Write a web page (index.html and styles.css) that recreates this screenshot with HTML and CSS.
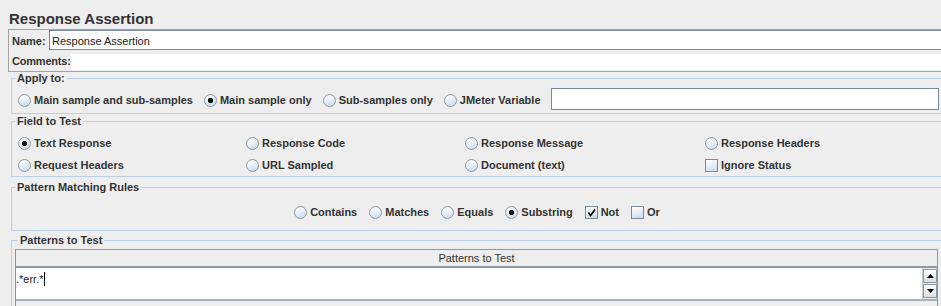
FILE: index.html
```html
<!DOCTYPE html>
<html lang="en">
<head>
<meta charset="utf-8">
<title>Response Assertion</title>
<link rel="stylesheet" href="styles.css">
</head>
<body>
<div class="page">
  <h1 class="title">Response Assertion</h1>

  <div class="namebox">
    <div class="nrow">
      <span class="lbl lbl-name">Name:</span>
      <div class="tf name-tf">Response Assertion</div>
    </div>
    <div class="crow">
      <span class="lbl lbl-comments">Comments:</span>
      <div class="ta"></div>
    </div>
  </div>

  <fieldset class="grp apply">
    <legend>Apply to:</legend>
    <div class="row">
      <label class="opt"><span class="radio"></span>Main sample and sub-samples</label>
      <label class="opt"><span class="radio on"></span>Main sample only</label>
      <label class="opt"><span class="radio"></span>Sub-samples only</label>
      <label class="opt"><span class="radio"></span>JMeter Variable</label>
      <div class="tf var-tf"></div>
    </div>
  </fieldset>

  <fieldset class="grp field">
    <legend>Field to Test</legend>
    <div class="fgrid">
      <label class="opt"><span class="radio on"></span>Text Response</label>
      <label class="opt"><span class="radio"></span>Response Code</label>
      <label class="opt"><span class="radio"></span>Response Message</label>
      <label class="opt"><span class="radio"></span>Response Headers</label>
      <label class="opt"><span class="radio"></span>Request Headers</label>
      <label class="opt"><span class="radio"></span>URL Sampled</label>
      <label class="opt"><span class="radio"></span>Document (text)</label>
      <label class="opt"><span class="check"></span>Ignore Status</label>
    </div>
  </fieldset>

  <fieldset class="grp rules">
    <legend>Pattern Matching Rules</legend>
    <div class="crow-rules">
      <label class="opt"><span class="radio"></span>Contains</label>
      <label class="opt"><span class="radio"></span>Matches</label>
      <label class="opt"><span class="radio"></span>Equals</label>
      <label class="opt"><span class="radio on"></span>Substring</label>
      <label class="opt"><span class="check"><svg width="11" height="11" viewBox="0 0 11 11"><path d="M2.5 5.5 L4.5 8.5 L9 2.5" fill="none" stroke="#000" stroke-width="1.7"/></svg></span>Not</label>
      <label class="opt"><span class="check"></span>Or</label>
    </div>
  </fieldset>

  <fieldset class="grp patterns">
    <legend>Patterns to Test</legend>
    <div class="table">
      <div class="thead">Patterns to Test</div>
      <div class="tbody">
        <div class="cell"><span class="txt">.*err.*</span><span class="caret"></span></div>
        <div class="vsb">
          <div class="sbtn up"><svg width="9" height="6" viewBox="0 0 9 6"><path d="M4.5 1 L8 5 L1 5 Z" fill="#000"/></svg></div>
          <div class="sbtn down"><svg width="9" height="6" viewBox="0 0 9 6"><path d="M1 1 L8 1 L4.5 5 Z" fill="#000"/></svg></div>
        </div>
      </div>
      <div class="tfoot"></div>
    </div>
  </fieldset>
</div>
</body>
</html>
```

FILE: styles.css
```css
* { box-sizing: border-box; }

html, body {
  margin: 0;
  padding: 0;
}

body {
  background: #eeeeee;
  width: 941px;
  height: 306px;
  overflow: hidden;
  font: bold 11px "Liberation Sans", Arial, sans-serif;
  color: #333333;
}

.page {
  width: 941px;
}

.title {
  margin: 0;
  height: 29px;
  padding: 10px 0 0 9px;
  font-size: 15px;
  line-height: 18px;
  font-weight: bold;
  color: #333333;
}

/* Name / comments box */
.namebox {
  margin-left: 8px;
  width: 940px;
  border: 1px solid #a3a3a3;
  border-right: none;
  padding: 0 0 1px 3px;
}

.nrow {
  display: flex;
  height: 20px;
  margin-bottom: 4px;
}

.crow {
  display: flex;
  height: 16px;
}

.lbl {
  flex: none;
  line-height: 13px;
  white-space: nowrap;
}

.lbl-name {
  width: 37px;
  padding-top: 5px;
}

.lbl-comments {
  width: 59px;
  padding-top: 1px;
  letter-spacing: -0.2px;
}

.tf {
  background: #ffffff;
  border: 1px solid #7a8a99;
  font-weight: normal;
  color: #222;
}

.name-tf {
  flex: 1;
  height: 20px;
  padding: 2px 0 0 2px;
  line-height: 16px;
  border-right: none;
}

.ta {
  flex: 1;
  height: 16px;
  background: #ffffff;
}

/* Titled groups */
.grp {
  margin: 0 -2px 0 11px;
  padding: 0;
  border: 1px solid #b8cfe5;
  min-width: 0;
}

.grp legend {
  margin-left: 3px;
  padding: 0 2px;
  line-height: 13px;
  font-size: 11px;
  font-weight: bold;
}

.apply .row {
  display: flex;
  align-items: center;
  height: 22px;
  margin: 3px 0 3px 0;
  padding: 0 3px 0 6px;
  gap: 11px;
}

.apply .opt {
  padding-top: 3px;
}

.var-tf {
  flex: 1;
  min-width: 0;
  height: 22px;
  margin-left: -1px;
}

.field {
  margin-top: 1px;
}

.fgrid {
  display: grid;
  grid-template-columns: 228px 219px 240px 1fr;
  grid-auto-rows: 22px;
  padding: 4px 0 0 6px;
}

.rules {
  margin-top: 4px;
}

.crow-rules {
  display: flex;
  justify-content: center;
  align-items: center;
  gap: 12px;
  height: 22px;
  margin: 7px 0 7px 0;
}

.patterns {
  margin-top: 3px;
  padding: 2px 4px 0 3px;
}

/* option controls */
.opt {
  display: flex;
  align-items: center;
  gap: 3px;
  line-height: 13px;
  white-space: nowrap;
}

.radio {
  flex: none;
  width: 13px;
  height: 13px;
  border-radius: 50%;
  border: 1px solid #8797a8;
  background: linear-gradient(160deg, #ffffff 0%, #e6eef6 50%, #c9d7e6 100%);
}

.radio.on {
  background:
    radial-gradient(circle at 50% 50%, #111 0, #111 2.4px, transparent 3px),
    linear-gradient(160deg, #ffffff 0%, #e6eef6 50%, #c9d7e6 100%);
}

.check {
  flex: none;
  width: 13px;
  height: 13px;
  border: 1px solid #7a8a99;
  background: linear-gradient(160deg, #ffffff 0%, #e6eef6 50%, #c9d7e6 100%);
  display: flex;
  align-items: center;
  justify-content: center;
}

.check svg {
  display: block;
}

/* table */
.table {
  border: 1px solid #8a98a6;
  border-bottom: none;
}

.thead {
  height: 18px;
  border-bottom: 2px solid #8f9aa5;
  background: #eeeeee;
  text-align: center;
  font-weight: normal;
  line-height: 15px;
  padding-top: 1px;
  color: #333;
}

.tbody {
  display: flex;
  height: 31px;
}

.cell {
  flex: 1;
  background: #ffffff;
  padding-top: 4px;
  font-weight: normal;
  line-height: 13px;
  color: #222;
}

.caret {
  display: inline-block;
  width: 1px;
  height: 14px;
  background: #000;
  vertical-align: -3px;
}

.vsb {
  flex: none;
  width: 15px;
  display: flex;
  flex-direction: column;
  gap: 1px;
  padding-top: 1px;
  background: #eeeeee;
  border-left: 1px solid #c9c9c9;
}

.sbtn {
  height: 14px;
  border: 1px solid #8a98a6;
  background: linear-gradient(#ffffff, #dcdcdc);
  display: flex;
  align-items: center;
  justify-content: center;
}

.tfoot {
  height: 12px;
  border-top: 2px solid #a9b0b7;
  background: #eeeeee;
}
```
